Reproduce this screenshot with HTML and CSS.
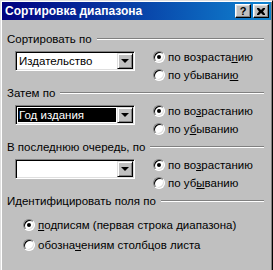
FILE: index.html
```html
<!DOCTYPE html>
<html>
    <head>
        <title>Сортировка диапазона</title>
        <link rel="stylesheet" href="styles.css">
    </head>
    <body>
        <div class="window">
            <div class="titlebar">
                <span class="title">Сортировка диапазона</span>
                <span class="tbtn help">?</span>
                <span class="tbtn close">
                    <svg width="8" height="7" viewBox="0 0 8 7">
                        <path d="M0 0h2l2 2 2-2h2v1l-2 2.5 2 2.5v1h-2l-2-2-2 2h-2v-1l2-2.5-2-2.5z" fill="#000"/>
                    </svg>
                </span>
            </div>

            <div class="content">
                <!-- first key -->
                <div class="group">
                    <div class="group-head"><span>Сортировать по</span><i class="rule"></i></div>
                    <div class="group-body">
                        <div class="combo">
                            <div class="field">Издательство</div>
                            <div class="drop"><b></b></div>
                        </div>
                        <div class="radios">
                            <label class="option"><span class="radio checked"></span><span>по возраста<u>н</u>ию</span></label>
                            <label class="option"><span class="radio"></span><span>по убывани<u>ю</u></span></label>
                        </div>
                    </div>
                </div>

                <!-- second key -->
                <div class="group">
                    <div class="group-head"><span>Затем по</span><i class="rule"></i></div>
                    <div class="group-body">
                        <div class="combo">
                            <div class="field"><span class="selected">Год издания</span></div>
                            <div class="drop"><b></b></div>
                        </div>
                        <div class="radios">
                            <label class="option"><span class="radio checked"></span><span>по во<u>з</u>растанию</span></label>
                            <label class="option"><span class="radio"></span><span>по у<u>б</u>ыванию</span></label>
                        </div>
                    </div>
                </div>

                <!-- third key -->
                <div class="group">
                    <div class="group-head"><span>В последнюю очередь, по</span><i class="rule"></i></div>
                    <div class="group-body">
                        <div class="combo">
                            <div class="field"></div>
                            <div class="drop"><b></b></div>
                        </div>
                        <div class="radios">
                            <label class="option"><span class="radio checked"></span><span>по во<u>з</u>растанию</span></label>
                            <label class="option"><span class="radio"></span><span>по уб<u>ы</u>ванию</span></label>
                        </div>
                    </div>
                </div>

                <!-- header row -->
                <div class="group">
                    <div class="group-head"><span>Идентифицировать поля по</span><i class="rule"></i></div>
                    <div class="ident">
                        <label class="option"><span class="radio checked"></span><span><u>п</u>одписям (первая строка диапазона)</span></label>
                        <label class="option"><span class="radio"></span><span>обозна<u>ч</u>ениям столбцов листа</span></label>
                    </div>
                </div>
            </div>
        </div>
    </body>
</html>
```

FILE: styles.css
```css
body {
  margin: 0;
  width: 273px;
  height: 270px;
  overflow: hidden;
  font-family: "Liberation Sans", Arial, sans-serif;
  font-size: 11.5px;
  color: #000;
}

.window {
  box-sizing: border-box;
  width: 273px;
  height: 274px;
  padding: 1px;
  background: #c0c0c0;
  border: 1px solid;
  border-color: #dfdfdf #000 #000 #dfdfdf;
  box-shadow: inset 1px 1px #fff, inset -1px -1px #808080;
}

.titlebar {
  display: flex;
  align-items: center;
  height: 18px;
  padding: 0 2px 0 3px;
  background: linear-gradient(to right, #000080, #1084d0);
}

.title {
  flex: 1;
  color: #fff;
  font-weight: bold;
  font-size: 12px;
}

.tbtn {
  box-sizing: border-box;
  display: flex;
  align-items: center;
  justify-content: center;
  width: 16px;
  height: 14px;
  background: #c0c0c0;
  border: 1px solid;
  border-color: #fff #000 #000 #fff;
  box-shadow: inset -1px -1px #808080, inset 1px 1px #dfdfdf;
  font-weight: bold;
  font-size: 11px;
  line-height: 12px;
}

.help {
  margin-right: 2px;
}

.content {
  padding: 13px 7px 0 5px;
}

.group-head {
  display: flex;
  align-items: center;
  gap: 5px;
  height: 12px;
}

.rule {
  flex: 1;
  height: 0;
  border-top: 1px solid #808080;
  border-bottom: 1px solid #fff;
}

.group-body {
  display: flex;
  height: 36px;
  margin-top: 6px;
  padding-left: 8px;
}

.combo {
  box-sizing: border-box;
  display: flex;
  width: 120px;
  height: 20px;
  padding: 1px;
  background: #fff;
  border: 1px solid;
  border-color: #808080 #fff #fff #808080;
  box-shadow: inset 1px 1px #000, inset -1px -1px #dfdfdf;
}

.field {
  flex: 1;
  display: flex;
  line-height: 16px;
  padding-left: 2px;
}

.selected {
  flex: 1;
  margin: 1px 1px 1px -1px;
  padding-left: 1px;
  line-height: 14px;
  background: #000;
  color: #fff;
}

.drop {
  box-sizing: border-box;
  display: flex;
  align-items: center;
  justify-content: center;
  width: 16px;
  height: 16px;
  background: #c0c0c0;
  border: 1px solid;
  border-color: #dfdfdf #000 #000 #dfdfdf;
  box-shadow: inset 1px 1px #fff, inset -1px -1px #808080;
}

.drop b {
  width: 0;
  height: 0;
  border-left: 4px solid transparent;
  border-right: 4px solid transparent;
  border-top: 4px solid #000;
}

.radios {
  display: flex;
  flex-direction: column;
  gap: 6px;
  margin-left: 18px;
}

.option {
  display: flex;
  align-items: center;
  gap: 3px;
  height: 12px;
  white-space: nowrap;
}

.radio {
  box-sizing: border-box;
  position: relative;
  width: 12px;
  height: 12px;
  border-radius: 50%;
  background: #fff;
  border: 1px solid;
  border-color: #808080 #fff #fff #808080;
  box-shadow: inset 1px 1px #000, inset -1px -1px #dfdfdf;
}

.checked::after {
  content: "";
  position: absolute;
  left: 3px;
  top: 3px;
  width: 4px;
  height: 4px;
  border-radius: 50%;
  background: #000;
}

.ident {
  display: flex;
  flex-direction: column;
  gap: 8px;
  margin-top: 12px;
  padding-left: 16px;
}
```
